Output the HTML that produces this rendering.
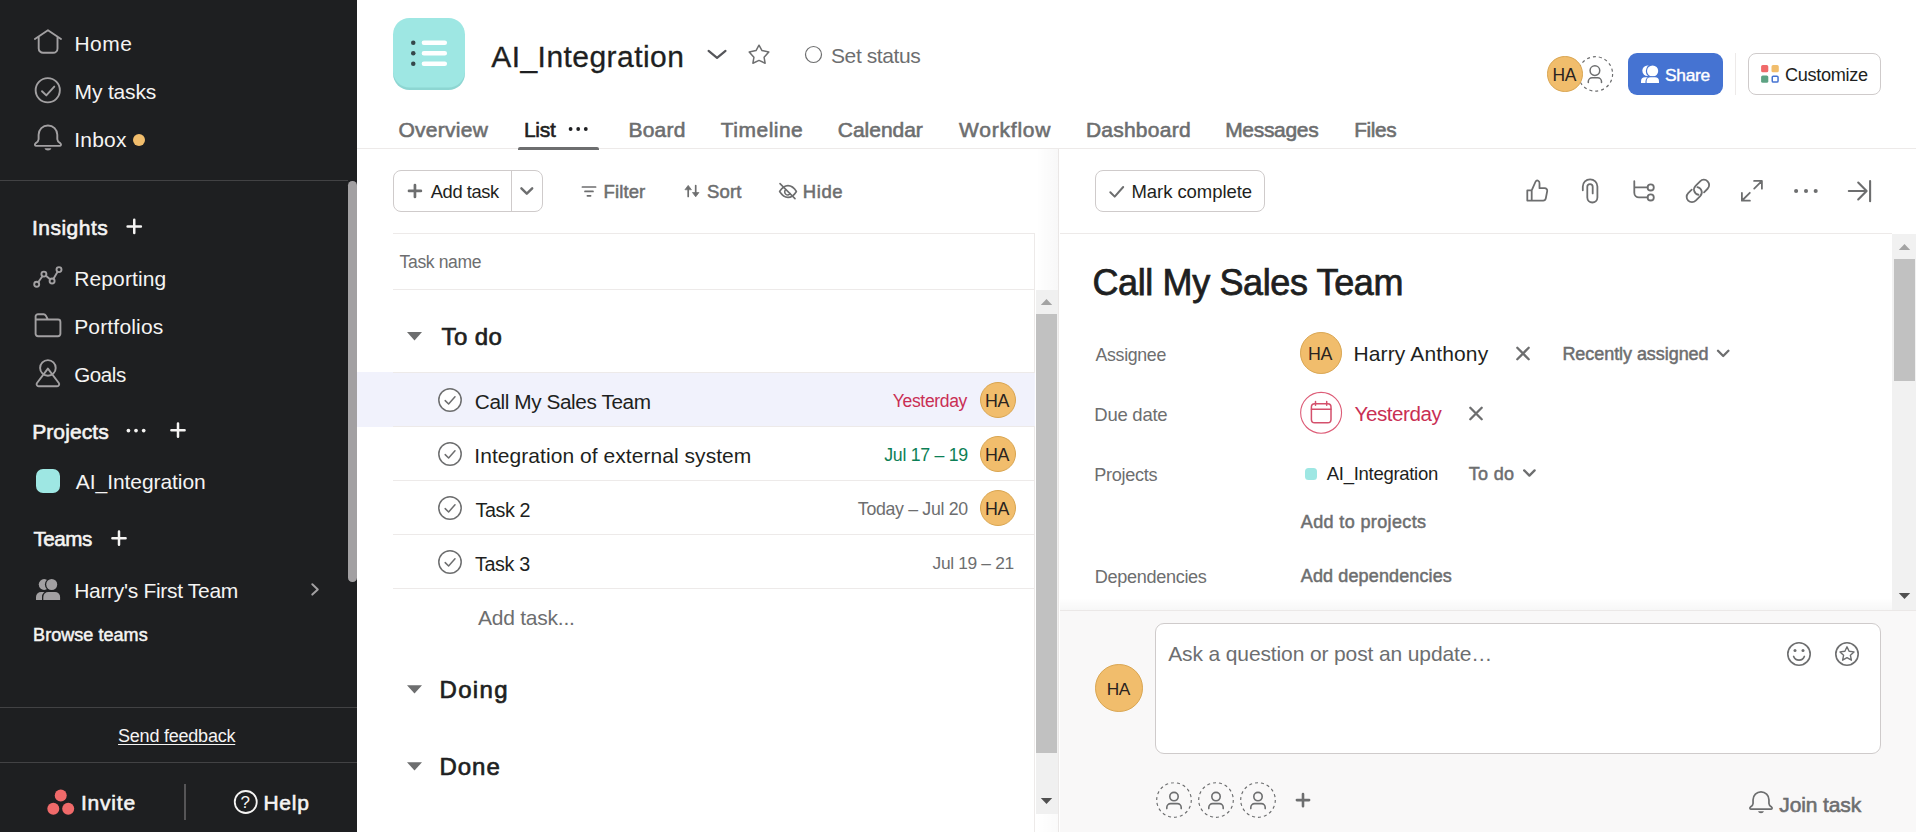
<!DOCTYPE html>
<html lang="en"><head><meta charset="utf-8"><title>AI_Integration - Asana</title>
<style>
html,body{margin:0;padding:0;}
body{width:1916px;height:832px;overflow:hidden;background:#fff;position:relative;font-family:"Liberation Sans",Arial,sans-serif;}
.b{position:absolute;box-sizing:border-box;display:block;}
.t{position:absolute;white-space:nowrap;margin:0;padding:0;font-weight:400;}
svg{overflow:visible;}
</style></head>
<body>
<aside>
<div class="b" style="left:0px;top:0px;width:357px;height:832px;background:#1e1f21;"></div>
<div class="b" style="left:0px;top:180px;width:348px;height:1px;background:#424244;"></div>
<div class="b" style="left:0px;top:707px;width:357px;height:1px;background:#424244;"></div>
<div class="b" style="left:0px;top:762px;width:357px;height:1px;background:#424244;"></div>
<div class="b" style="left:348.3px;top:181px;width:8.6px;height:401px;background:#a2a0a2;border-radius:4.3px;"></div>
<div class="b" style="left:184px;top:784px;width:1.5px;height:36px;background:#565557;"></div>
<span class="t" style="left:74.38px;top:32px;line-height:23px;font-size:21.0px;color:#f5f4f3;letter-spacing:0.500px;">Home</span>
<span class="t" style="left:74.58px;top:80px;line-height:23px;font-size:21.0px;color:#f5f4f3;letter-spacing:-0.171px;">My tasks</span>
<span class="t" style="left:74.33px;top:128px;line-height:23px;font-size:21.0px;color:#f5f4f3;letter-spacing:0.188px;">Inbox</span>
<div class="b" style="left:133px;top:134px;width:12px;height:12px;background:#f1bd6c;border-radius:50%;"></div>
<span class="t" style="left:31.92px;top:216px;line-height:23px;font-size:21.0px;color:#f5f4f3;letter-spacing:0.493px;-webkit-text-stroke:0.59px;">Insights</span>
<span class="t" style="left:74.17px;top:267px;line-height:23px;font-size:21.0px;color:#f5f4f3;letter-spacing:0.134px;">Reporting</span>
<span class="t" style="left:74.17px;top:315px;line-height:23px;font-size:21.0px;color:#f5f4f3;letter-spacing:0.175px;">Portfolios</span>
<span class="t" style="left:74.20px;top:363px;line-height:23px;font-size:20.58px;color:#f5f4f3;letter-spacing:-0.413px;">Goals</span>
<span class="t" style="left:32.17px;top:420px;line-height:23px;font-size:21.0px;color:#f5f4f3;letter-spacing:0.100px;-webkit-text-stroke:0.59px;">Projects</span>
<div class="b" style="left:35.75px;top:469.25px;width:24.5px;height:24px;background:#9ee7e3;border-radius:7px;"></div>
<span class="t" style="left:75.80px;top:470px;line-height:23px;font-size:21.0px;color:#f5f4f3;letter-spacing:-0.062px;">AI_Integration</span>
<span class="t" style="left:33.42px;top:527px;line-height:23px;font-size:20.58px;color:#f5f4f3;letter-spacing:-0.406px;-webkit-text-stroke:0.59px;">Teams</span>
<span class="t" style="left:74.17px;top:579px;line-height:23px;font-size:21.0px;color:#f5f4f3;letter-spacing:-0.304px;">Harry&#x27;s First Team</span>
<span class="t" style="left:33.12px;top:625px;line-height:20px;font-size:18.0px;color:#f5f4f3;letter-spacing:0.045px;-webkit-text-stroke:0.50px;">Browse teams</span>
<span class="t" style="left:118.05px;top:726px;line-height:20px;font-size:18.0px;color:#f5f4f3;letter-spacing:-0.223px;text-decoration:underline;text-decoration-thickness:1px;text-underline-offset:2px;">Send feedback</span>
<span class="t" style="left:80.92px;top:791px;line-height:23px;font-size:21.0px;color:#f5f4f3;letter-spacing:0.805px;-webkit-text-stroke:0.59px;">Invite</span>
<span class="t" style="left:263.38px;top:791px;line-height:23px;font-size:21.0px;color:#f5f4f3;letter-spacing:0.750px;-webkit-text-stroke:0.59px;">Help</span>
<span class="t" style="left:240.57px;top:793px;line-height:19px;font-size:17px;color:#f5f4f3;">?</span>
<svg class="b" style="left:0px;top:0px;" width="357" height="832" viewBox="0 0 357 832">
<g fill="none" stroke="#a2a0a2" stroke-width="1.9" stroke-linecap="round" stroke-linejoin="round">
<path d="M34.9 39 L47.95 30.3 L61 39 M38.7 36.8 V48.4 a4.4 4.4 0 0 0 4.4 4.4 H53.1 a4.4 4.4 0 0 0 4.4 -4.4 V36.8"/>
<circle cx="47.75" cy="90.25" r="12.1"/><path d="M42 91.2 L46.3 95.4 L54.3 86.6"/>
<circle cx="36.7" cy="284.3" r="2.5"/><circle cx="43.9" cy="274.1" r="2.5"/><circle cx="52.1" cy="281" r="2.5"/><circle cx="59" cy="269.6" r="2.5"/>
<path d="M38.2 282.2 L42.4 276.2 M45.9 275.7 L50.1 279.3 M53.5 278.8 L57.6 271.8"/>
<path d="M35.6 333.8 V316.6 a2.4 2.4 0 0 1 2.4 -2.4 H43.6 a2.4 2.4 0 0 1 2.1 1.2 L47.9 319.5 H58 a2.4 2.4 0 0 1 2.4 2.4 V333.8 a2.4 2.4 0 0 1 -2.4 2.4 H38 a2.4 2.4 0 0 1 -2.4 -2.4 Z M35.6 319.5 H47.9"/>
<circle cx="47.9" cy="367.9" r="7.8"/>
<path d="M47.9 368.6 L37 383 a2 2 0 0 0 1.7 3.2 H57.1 a2 2 0 0 0 1.7 -3.2 Z"/>
<path d="M312.3 584.2 L317.8 589.4 L312.3 594.6" stroke-width="2"/>
</g>
<g transform="translate(47.95 125.45) scale(1)" stroke="#a2a0a2" stroke-width="1.90" stroke-linejoin="round" stroke-linecap="round"><path fill="none" d="M-9.35 13.75 V9.35 a9.35 9.35 0 0 1 18.7 0 V13.75 c0 2 1.6 3.2 3.1 4.2 c1.2 1 .6 2.5 -.8 2.5 H-11.65 c-1.4 0 -2 -1.5 -.8 -2.5 c1.5 -1 3.1 -2.2 3.1 -4.2 Z"/><path fill="#a2a0a2" stroke="none" d="M-3.5 22.8 H3.5 a3.6 3.1 0 0 1 -7 0 Z"/></g>
<g fill="none" stroke="#f5f4f3" stroke-width="2.5" stroke-linecap="round">
<path d="M134.25 219.8 V233 M127.6 226.4 H140.9"/>
<path d="M178 423.6 V436.8 M171.4 430.2 H184.6"/>
<path d="M119 531.6 V544.8 M112.4 538.2 H125.6"/>
</g>
<g fill="#f5f4f3"><circle cx="128.4" cy="430.6" r="1.85"/><circle cx="136" cy="430.6" r="1.85"/><circle cx="143.7" cy="430.6" r="1.85"/></g>
<g fill="#a2a0a2">
<circle cx="44.15" cy="584.5" r="5.4"/>
<path d="M36 600 V597 a5 5 0 0 1 5 -5 H47 V600 Z"/>
<circle cx="51.7" cy="584.5" r="6.8" fill="#1e1f21"/>
<circle cx="51.7" cy="584.5" r="5.5"/>
<path d="M43.3 600 V597 a5 5 0 0 1 5 -5 H55.1 a5 5 0 0 1 5 5 V600 Z" stroke="#1e1f21" stroke-width="2.6" paint-order="stroke"/>
</g>
<g fill="#f06a6a"><circle cx="60.75" cy="795.6" r="6"/><circle cx="53.3" cy="808.8" r="6"/><circle cx="68.2" cy="808.8" r="6"/></g>
<circle cx="245.75" cy="802" r="11" fill="none" stroke="#f5f4f3" stroke-width="1.8"/>
</svg>
</aside>
<header>
<div class="b" style="left:393.25px;top:17.9px;width:71.9px;height:72px;background:#9ee7e3;border-radius:16.5px;box-shadow:inset 0 -2.5px 0 rgba(0,70,70,.10);"></div>
<span class="t" style="left:491.20px;top:40px;line-height:33px;font-size:30.0px;color:#1e1f21;letter-spacing:0.456px;-webkit-text-stroke:0.3px;">AI_Integration</span>
<span class="t" style="left:831.00px;top:44px;line-height:23px;font-size:21.0px;color:#6d6e6f;letter-spacing:-0.403px;">Set status</span>
<div class="b" style="left:1547.25px;top:56.0px;width:35.5px;height:35.5px;background:#f1bd6c;border-radius:50%;border:1px solid #d9a550;z-index:3;"></div>
<span class="t" style="left:1552.62px;top:65px;line-height:20px;font-size:17.46px;color:#2a2320;letter-spacing:-0.375px;z-index:3;">HA</span>
<div class="b" style="left:1628.1px;top:53px;width:94.8px;height:41.8px;background:#4573d2;border-radius:9px;"></div>
<span class="t" style="left:1665.05px;top:65px;line-height:20px;font-size:17.39px;color:#ffffff;letter-spacing:-0.294px;-webkit-text-stroke:0.40px;">Share</span>
<div class="b" style="left:1735px;top:53px;width:1px;height:41.5px;background:#edeae9;"></div>
<div class="b" style="left:1748.25px;top:53.25px;width:132.5px;height:41.25px;background:#ffffff;border-radius:8px;border:1px solid #cfcbcb;"></div>
<span class="t" style="left:1784.92px;top:65px;line-height:20px;font-size:18.13px;color:#1e1f21;letter-spacing:-0.287px;">Customize</span>
<div class="b" style="left:357px;top:148px;width:1559px;height:1px;background:#edeae9;"></div>
<span class="t" style="left:398.50px;top:118px;line-height:23px;font-size:21.0px;color:#6d6e6f;letter-spacing:0.268px;-webkit-text-stroke:0.59px;">Overview</span>
<span class="t" style="left:523.88px;top:118px;line-height:23px;font-size:21.0px;color:#1e1f21;letter-spacing:-0.233px;-webkit-text-stroke:0.59px;">List</span>
<span class="t" style="left:628.38px;top:118px;line-height:23px;font-size:21.0px;color:#6d6e6f;letter-spacing:0.269px;-webkit-text-stroke:0.59px;">Board</span>
<span class="t" style="left:720.83px;top:118px;line-height:23px;font-size:21.0px;color:#6d6e6f;letter-spacing:0.479px;-webkit-text-stroke:0.59px;">Timeline</span>
<span class="t" style="left:837.80px;top:118px;line-height:23px;font-size:21.0px;color:#6d6e6f;letter-spacing:-0.025px;-webkit-text-stroke:0.59px;">Calendar</span>
<span class="t" style="left:959.08px;top:118px;line-height:23px;font-size:21.0px;color:#6d6e6f;letter-spacing:0.775px;-webkit-text-stroke:0.59px;">Workflow</span>
<span class="t" style="left:1085.88px;top:118px;line-height:23px;font-size:21.0px;color:#6d6e6f;letter-spacing:0.244px;-webkit-text-stroke:0.59px;">Dashboard</span>
<span class="t" style="left:1225.17px;top:118px;line-height:23px;font-size:21.0px;color:#6d6e6f;letter-spacing:-0.311px;-webkit-text-stroke:0.59px;">Messages</span>
<span class="t" style="left:1354.17px;top:118px;line-height:23px;font-size:20.79px;color:#6d6e6f;letter-spacing:-0.344px;-webkit-text-stroke:0.59px;">Files</span>
<div class="b" style="left:518.25px;top:147px;width:80.75px;height:3px;background:#6d6e6f;border-radius:2px 2px 0 0;"></div>
<svg class="b" style="left:357px;top:0px;" width="1559" height="150" viewBox="357 0 1559 150">
<g fill="#35474a"><circle cx="413.25" cy="42.8" r="2.25"/><circle cx="413.25" cy="53.2" r="2.25"/><circle cx="413.25" cy="63.7" r="2.25"/></g>
<g stroke="#ffffff" stroke-width="4.5" stroke-linecap="round"><path d="M423.9 42.8 H444.8 M423.9 53.2 H444.8 M423.9 63.7 H444.8"/></g>
<path d="M708.6 50.9 L717.05 57.9 L725.5 50.9" fill="none" stroke="#55565a" stroke-width="2.2" stroke-linecap="round" stroke-linejoin="round"/>
<path d="M759 45.2 L762 50.6 L768.8 52 L764.1 57.3 L765.1 63.2 L759 60.4 L752.9 63.2 L753.9 57.3 L749.2 52 L756 50.6 Z" fill="none" stroke="#6d6e6f" stroke-width="1.5" stroke-linejoin="round"/>
<circle cx="813.5" cy="54.5" r="8" fill="none" stroke="#6d6e6f" stroke-width="1.2"/>
<circle cx="1595.4" cy="73.9" r="17.2" fill="none" stroke="#6d6e6f" stroke-width="1.2" stroke-dasharray="3 3"/>
<g fill="none" stroke="#6d6e6f" stroke-width="1.5" stroke-linecap="round"><circle cx="1594.9" cy="70.6" r="4.85"/><path d="M1588.3 82.4 V81.6 a3.8 3.8 0 0 1 3.8 -3.8 h5.6 a3.8 3.8 0 0 1 3.8 3.8 v.8"/></g>
<g fill="#ffffff">
<circle cx="1647.5" cy="70.7" r="5.2"/>
<path d="M1641 82.9 V81.3 a4 4 0 0 1 4 -4 H1649 V82.9 Z"/>
<circle cx="1652.6" cy="71" r="6.8" fill="#4573d2"/>
<circle cx="1652.6" cy="71" r="5.6"/>
<path d="M1646.6 82.9 V81.3 a4 4 0 0 1 4 -4 h4.4 a4 4 0 0 1 4 4 V82.9 Z" stroke="#4573d2" stroke-width="2.2" paint-order="stroke"/>
</g>
<rect x="1761.1" y="65.1" width="7.2" height="7.2" rx="1.6" fill="#f06a6a"/>
<rect x="1771.5" y="65.1" width="7.3" height="7.2" rx="1.6" fill="#f1bd6c"/>
<rect x="1761.1" y="75.5" width="7.2" height="7.3" rx="1.6" fill="#5da283"/>
<rect x="1772.25" y="76.2" width="5.8" height="5.9" rx="1.1" fill="none" stroke="#4573d2" stroke-width="1.5"/>
<g fill="#1e1f21"><circle cx="570.6" cy="129" r="1.9"/><circle cx="578.2" cy="129" r="1.9"/><circle cx="585.8" cy="129" r="1.9"/></g>
</svg>
</header>
<main>
<div class="b" style="left:393.25px;top:170.25px;width:149.5px;height:41.5px;background:#fff;border-radius:8px;border:1px solid #cfcbcb;"></div>
<div class="b" style="left:511px;top:171px;width:1px;height:40px;background:#cfcbcb;"></div>
<span class="t" style="left:430.80px;top:181px;line-height:21px;font-size:18.32px;color:#1e1f21;letter-spacing:-0.400px;">Add task</span>
<span class="t" style="left:603.50px;top:181px;line-height:21px;font-size:18.5px;color:#6d6e6f;letter-spacing:0.125px;-webkit-text-stroke:0.52px;">Filter</span>
<span class="t" style="left:707.12px;top:181px;line-height:21px;font-size:18.5px;color:#6d6e6f;letter-spacing:0.108px;-webkit-text-stroke:0.52px;">Sort</span>
<span class="t" style="left:802.70px;top:181px;line-height:21px;font-size:18.5px;color:#6d6e6f;letter-spacing:0.617px;-webkit-text-stroke:0.52px;">Hide</span>
<div class="b" style="left:393.25px;top:233px;width:641.5px;height:1px;background:#edeae9;"></div>
<div class="b" style="left:393.25px;top:289px;width:641.5px;height:1px;background:#edeae9;"></div>
<div class="b" style="left:1034px;top:233px;width:1px;height:599px;background:#edeae9;"></div>
<span class="t" style="left:399.62px;top:252px;line-height:20px;font-size:17.57px;color:#6d6e6f;letter-spacing:-0.375px;">Task name</span>
<span class="t" style="left:441.50px;top:323px;line-height:27px;font-size:24.0px;color:#1e1f21;letter-spacing:0.438px;-webkit-text-stroke:0.67px;">To do</span>
<span class="t" style="left:439.43px;top:676px;line-height:27px;font-size:24.0px;color:#1e1f21;letter-spacing:1.381px;-webkit-text-stroke:0.67px;">Doing</span>
<span class="t" style="left:439.43px;top:753px;line-height:27px;font-size:24.0px;color:#1e1f21;letter-spacing:1.000px;-webkit-text-stroke:0.67px;">Done</span>
<div class="b" style="left:357px;top:372px;width:677.5px;height:55px;background:#f1f2fc;"></div>
<div class="b" style="left:393.25px;top:372px;width:641.5px;height:1px;background:#edeae9;"></div>
<div class="b" style="left:393.25px;top:426px;width:641.5px;height:1px;background:#edeae9;"></div>
<div class="b" style="left:393.25px;top:480px;width:641.5px;height:1px;background:#edeae9;"></div>
<div class="b" style="left:393.25px;top:534px;width:641.5px;height:1px;background:#edeae9;"></div>
<div class="b" style="left:393.25px;top:588px;width:641.5px;height:1px;background:#edeae9;"></div>
<span class="t" style="left:474.80px;top:390px;line-height:23px;font-size:20.79px;color:#1e1f21;letter-spacing:-0.415px;">Call My Sales Team</span>
<span class="t" style="left:892.83px;top:391px;line-height:20px;font-size:17.57px;color:#c92f54;letter-spacing:-0.369px;">Yesterday</span>
<div class="b" style="left:980px;top:382.02px;width:36px;height:36px;background:#f1bd6c;border-radius:50%;border:1px solid #d9a550;"></div>
<span class="t" style="left:985.12px;top:391px;line-height:20px;font-size:17.82px;color:#2a2320;letter-spacing:-0.375px;">HA</span>
<span class="t" style="left:474.32px;top:444px;line-height:23px;font-size:21.0px;color:#1e1f21;letter-spacing:0.053px;">Integration of external system</span>
<span class="t" style="left:884.25px;top:445px;line-height:20px;font-size:17.76px;color:#0d7f56;letter-spacing:-0.287px;">Jul 17 – 19</span>
<div class="b" style="left:980px;top:436.02px;width:36px;height:36px;background:#f1bd6c;border-radius:50%;border:1px solid #d9a550;"></div>
<span class="t" style="left:985.12px;top:445px;line-height:20px;font-size:17.82px;color:#2a2320;letter-spacing:-0.375px;">HA</span>
<span class="t" style="left:475.43px;top:499px;line-height:22px;font-size:19.74px;color:#1e1f21;letter-spacing:-0.410px;">Task 2</span>
<span class="t" style="left:857.83px;top:499px;line-height:20px;font-size:17.76px;color:#6d6e6f;letter-spacing:-0.323px;">Today – Jul 20</span>
<div class="b" style="left:980px;top:490.02px;width:36px;height:36px;background:#f1bd6c;border-radius:50%;border:1px solid #d9a550;"></div>
<span class="t" style="left:985.12px;top:499px;line-height:20px;font-size:17.82px;color:#2a2320;letter-spacing:-0.375px;">HA</span>
<span class="t" style="left:475.02px;top:553px;line-height:22px;font-size:19.74px;color:#1e1f21;letter-spacing:-0.375px;">Task 3</span>
<span class="t" style="left:932.55px;top:553px;line-height:20px;font-size:17.39px;color:#6d6e6f;letter-spacing:-0.340px;">Jul 19 – 21</span>
<span class="t" style="left:478.00px;top:606px;line-height:23px;font-size:21.0px;color:#6d6e6f;letter-spacing:-0.237px;">Add task...</span>
<div class="b" style="left:1035.5px;top:149px;width:22.5px;height:141px;background:linear-gradient(90deg,rgba(0,0,0,0),rgba(0,0,0,.028));"></div>
<div class="b" style="left:1035.5px;top:814px;width:22.5px;height:18px;background:linear-gradient(90deg,rgba(0,0,0,0),rgba(0,0,0,.02));"></div>
<div class="b" style="left:1035.5px;top:289.5px;width:22.5px;height:524.5px;background:#f0f0f0;"></div>
<div class="b" style="left:1036.2px;top:313.6px;width:20.6px;height:439.2px;background:#c1c1c1;"></div>
<svg class="b" style="left:357px;top:150px;" width="702" height="682" viewBox="357 150 702 682">
<g fill="none" stroke="#6d6e6f" stroke-width="2.7" stroke-linecap="round"><path d="M414.95 185 V196.9 M409 190.95 H420.9"/></g>
<path d="M521.4 188.3 L526.8 193.7 L532.2 188.3" fill="none" stroke="#6d6e6f" stroke-width="2.4" stroke-linecap="round" stroke-linejoin="round"/>
<g fill="none" stroke="#6d6e6f" stroke-width="1.7" stroke-linecap="round"><path d="M582.4 187 H595.6 M585 191.4 H593 M587.4 195.8 H590.6"/></g>
<g fill="#6d6e6f" stroke="#6d6e6f" stroke-width="1.7" stroke-linecap="round" stroke-linejoin="round"><path fill="none" d="M688.2 196.4 V188.6 M695.7 185.6 V193.4"/><path stroke-width=".8" d="M685.2 189.4 L688.2 185.4 L691.2 189.4 Z M692.7 192.8 L695.7 196.8 L698.7 192.8 Z"/></g>
<g fill="none" stroke="#6d6e6f" stroke-width="1.6" stroke-linecap="round" stroke-linejoin="round"><path d="M779.6 191.5 C782.4 187.2 785.2 185.6 788 185.6 C790.8 185.6 793.8 187.2 796.4 191.5 C793.8 195.8 790.8 197.4 788 197.4 C785.2 197.4 782.4 195.8 779.6 191.5 Z"/><path d="M785.6 189.8 a3 3 0 1 0 4.6 3.8"/><path d="M780 183.6 L795 198.6"/></g>
<g fill="#6d6e6f"><path d="M407 332 H422 L414.5 340.4 Z"/><path d="M407 685.2 H422 L414.5 693.6 Z"/><path d="M407 762.2 H422 L414.5 770.6 Z"/></g>
<g fill="#fff" stroke="#6d6e6f" stroke-width="1.5" stroke-linecap="round" stroke-linejoin="round">
<circle cx="450" cy="400" r="11.2"/><path fill="none" d="M445.2 400.6 L448.6 404 L455 396.8"/><circle cx="450" cy="454" r="11.2"/><path fill="none" d="M445.2 454.6 L448.6 458 L455 450.8"/><circle cx="450" cy="508" r="11.2"/><path fill="none" d="M445.2 508.6 L448.6 512 L455 504.8"/><circle cx="450" cy="562" r="11.2"/><path fill="none" d="M445.2 562.6 L448.6 566 L455 558.8"/>
</g>
<path d="M1040.8 305 H1052.2 L1046.5 299 Z" fill="#a3a3a3"/><path d="M1040.8 798 H1052.2 L1046.5 804 Z" fill="#505050"/>
</svg>
</main>
<section>
<div class="b" style="left:1058px;top:149px;width:1.2px;height:683px;background:#eae7e6;"></div>
<div class="b" style="left:1059.2px;top:149px;width:856.8px;height:683px;background:#ffffff;"></div>
<div class="b" style="left:1059.5px;top:233px;width:832.7px;height:1px;background:#edeae9;"></div>
<div class="b" style="left:1095px;top:170.25px;width:169.5px;height:41.5px;background:#fff;border-radius:8px;border:1px solid #cfcbcb;"></div>
<span class="t" style="left:1131.50px;top:181px;line-height:21px;font-size:18.5px;color:#1e1f21;letter-spacing:-0.067px;">Mark complete</span>
<span class="t" style="left:1092.45px;top:262px;line-height:41px;font-size:36.0px;color:#1e1f21;letter-spacing:-0.375px;-webkit-text-stroke:0.75px;">Call My Sales Team</span>
<span class="t" style="left:1095.50px;top:345px;line-height:20px;font-size:17.76px;color:#6d6e6f;letter-spacing:-0.321px;">Assignee</span>
<span class="t" style="left:1094.30px;top:404px;line-height:21px;font-size:18.5px;color:#6d6e6f;letter-spacing:-0.250px;">Due date</span>
<span class="t" style="left:1094.30px;top:465px;line-height:20px;font-size:18.13px;color:#6d6e6f;letter-spacing:-0.311px;">Projects</span>
<span class="t" style="left:1094.70px;top:567px;line-height:20px;font-size:18.13px;color:#6d6e6f;letter-spacing:-0.325px;">Dependencies</span>
<div class="b" style="left:1300.1px;top:332.1px;width:41.8px;height:41.8px;background:#f1bd6c;border-radius:50%;border:1px solid #d9a550;"></div>
<span class="t" style="left:1308.12px;top:344px;line-height:20px;font-size:17.82px;color:#2a2320;letter-spacing:-0.375px;">HA</span>
<span class="t" style="left:1353.38px;top:342px;line-height:23px;font-size:21.0px;color:#1e1f21;letter-spacing:0.142px;">Harry Anthony</span>
<span class="t" style="left:1562.42px;top:344px;line-height:20px;font-size:18.0px;color:#6d6e6f;letter-spacing:-0.058px;-webkit-text-stroke:0.50px;">Recently assigned</span>
<span class="t" style="left:1354.50px;top:402px;line-height:23px;font-size:20.58px;color:#c92f54;letter-spacing:-0.447px;">Yesterday</span>
<div class="b" style="left:1305px;top:467.5px;width:12px;height:12px;background:#9ee7e3;border-radius:3.5px;"></div>
<span class="t" style="left:1326.80px;top:463px;line-height:21px;font-size:18.5px;color:#1e1f21;letter-spacing:-0.292px;">AI_Integration</span>
<span class="t" style="left:1468.83px;top:464px;line-height:20px;font-size:18.0px;color:#6d6e6f;letter-spacing:0.281px;-webkit-text-stroke:0.50px;">To do</span>
<span class="t" style="left:1300.80px;top:512px;line-height:20px;font-size:18.0px;color:#6d6e6f;letter-spacing:0.371px;-webkit-text-stroke:0.50px;">Add to projects</span>
<span class="t" style="left:1300.80px;top:566px;line-height:20px;font-size:18.0px;color:#6d6e6f;letter-spacing:0.127px;-webkit-text-stroke:0.50px;">Add dependencies</span>
<div class="b" style="left:1892.2px;top:233.5px;width:23.8px;height:376px;background:#f1f1f1;"></div>
<div class="b" style="left:1894.3px;top:259px;width:20.6px;height:122px;background:#c1c1c1;"></div>
<div class="b" style="left:1059.5px;top:598px;width:832.7px;height:12px;background:linear-gradient(180deg,rgba(0,0,0,0),rgba(0,0,0,.03));"></div>
<div class="b" style="left:1059.5px;top:609.5px;width:856.5px;height:222.5px;background:#f9f8f8;border-top:1px solid #ebe8e7;"></div>
<div class="b" style="left:1155px;top:623px;width:726px;height:131px;background:#ffffff;border-radius:9px;border:1px solid #cfcbcb;"></div>
<div class="b" style="left:1095.2px;top:664.2px;width:47.6px;height:47.6px;background:#f1bd6c;border-radius:50%;border:1px solid #d9a550;"></div>
<span class="t" style="left:1106.72px;top:679px;line-height:20px;font-size:17.28px;color:#2a2320;letter-spacing:-0.325px;">HA</span>
<span class="t" style="left:1168.20px;top:642px;line-height:23px;font-size:21.0px;color:#6d6e6f;letter-spacing:-0.123px;">Ask a question or post an update…</span>
<span class="t" style="left:1779.25px;top:793px;line-height:23px;font-size:21.0px;color:#6d6e6f;letter-spacing:-0.116px;-webkit-text-stroke:0.59px;">Join task</span>
<svg class="b" style="left:1059px;top:150px;" width="857" height="682" viewBox="1059 150 857 682">
<path d="M1110.3 192.2 L1114.7 196.6 L1123.2 187" fill="none" stroke="#6d6e6f" stroke-width="2" stroke-linecap="round" stroke-linejoin="round"/>
<g fill="none" stroke="#6d6e6f" stroke-width="1.8" stroke-linecap="round" stroke-linejoin="round">
<path d="M1527.3 190.4 H1531.7 V200.6 H1527.3 Z M1531.7 190.4 L1535.4 182 C1536 180.6 1537.2 180.2 1538.2 180.8 C1539.4 181.4 1539.6 182.6 1539.5 183.6 V188.2 H1544.6 C1546.4 188.2 1547.5 189.6 1547.2 191.2 L1545.8 198.4 C1545.5 199.8 1544.6 200.6 1543.2 200.6 H1531.7"/>
<path d="M1582.8 190.3 V186.6 a7.3 7.3 0 0 1 14.6 0 V197.5 a5.05 5.05 0 0 1 -10.1 0 V186.8 a2.7 2.7 0 0 1 5.4 0 V193.4"/>
<path d="M1634.3 181.2 V192.7 a4.7 4.7 0 0 0 4.7 4.7 H1647.5 M1634.3 187.4 H1647.5"/><circle cx="1650.7" cy="187.4" r="3.1"/><circle cx="1650.7" cy="197.4" r="3.1"/>
<g transform="translate(1697.9 190.95) rotate(-45)"><path d="M-2.34 3.04 A5.3 5.3 0 0 1 2 -5.3 H8.4 A5.3 5.3 0 0 1 8.4 5.3 H3.4"/><path d="M2.34 -3.04 A5.3 5.3 0 0 1 -2 5.3 H-8.4 A5.3 5.3 0 0 1 -8.4 -5.3 H-3.4"/></g>
<path d="M1754.1 180.9 H1761.9 V188.7 M1761.7 181.1 L1754.2 188.6 M1749.9 200.7 H1741.9 V192.9 M1742.1 200.5 L1749.8 192.8"/>
<path d="M1848.8 191 H1866 M1858.2 182.6 L1866.6 191 L1858.2 199.4 M1870.1 181 V201.2" stroke-width="2.1"/>
</g>
<g fill="#6d6e6f"><circle cx="1796.1" cy="191" r="2.05"/><circle cx="1806" cy="191" r="2.05"/><circle cx="1815.7" cy="191" r="2.05"/></g>
<g fill="none" stroke="#6d6e6f" stroke-width="2.3" stroke-linecap="round"><path d="M1517.3 347.8 L1528.7 359.2 M1528.7 347.8 L1517.3 359.2 M1470.3 407.8 L1481.7 419.2 M1481.7 407.8 L1470.3 419.2"/></g>
<g fill="none" stroke="#6d6e6f" stroke-width="2.3" stroke-linecap="round" stroke-linejoin="round"><path d="M1718 350.8 L1723.2 356 L1728.4 350.8 M1524.2 470.4 L1529.4 475.6 L1534.6 470.4"/></g>
<circle cx="1321.1" cy="412.8" r="20.45" fill="#fff" stroke="#dd5c77" stroke-width="1.1"/>
<g fill="none" stroke="#d4506c" stroke-width="1.5" stroke-linecap="round" stroke-linejoin="round"><rect x="1311.4" y="403.8" width="19.6" height="19" rx="3.3"/><path d="M1311.4 409.3 H1331 M1315.5 401.6 V405.2 M1326.7 401.6 V405.2"/></g>
<path d="M1898.8 250 H1910.2 L1904.5 244 Z" fill="#a3a3a3"/><path d="M1898.8 593 H1910.2 L1904.5 599 Z" fill="#505050"/>
<g fill="none" stroke="#6d6e6f" stroke-width="1.6" stroke-linecap="round" stroke-linejoin="round">
<circle cx="1799" cy="654" r="11.2"/><path d="M1793.6 656.4 a5.8 5.8 0 0 0 10.8 0"/>
<circle cx="1847" cy="654" r="11.2"/><path d="M1847 646.8 L1849.1 651.3 L1854 651.9 L1850.4 655.3 L1851.4 660.2 L1847 657.7 L1842.6 660.2 L1843.6 655.3 L1840 651.9 L1844.9 651.3 Z" stroke-width="1.4"/>
</g>
<g fill="#6d6e6f"><circle cx="1795" cy="650.4" r="1.5"/><circle cx="1803" cy="650.4" r="1.5"/></g>
<circle cx="1174" cy="800" r="17.3" fill="#f9f8f8" stroke="#6d6e6f" stroke-width="1.15" stroke-dasharray="3 3"/><g fill="none" stroke="#6d6e6f" stroke-width="1.6" stroke-linecap="round"><circle cx="1174" cy="796.6" r="4.2"/><path d="M1166.8 808.6 v-1.2 a3.8 3.8 0 0 1 3.8 -3.8 h6.8 a3.8 3.8 0 0 1 3.8 3.8 v1.2"/></g><circle cx="1216" cy="800" r="17.3" fill="#f9f8f8" stroke="#6d6e6f" stroke-width="1.15" stroke-dasharray="3 3"/><g fill="none" stroke="#6d6e6f" stroke-width="1.6" stroke-linecap="round"><circle cx="1216" cy="796.6" r="4.2"/><path d="M1208.8 808.6 v-1.2 a3.8 3.8 0 0 1 3.8 -3.8 h6.8 a3.8 3.8 0 0 1 3.8 3.8 v1.2"/></g><circle cx="1258" cy="800" r="17.3" fill="#f9f8f8" stroke="#6d6e6f" stroke-width="1.15" stroke-dasharray="3 3"/><g fill="none" stroke="#6d6e6f" stroke-width="1.6" stroke-linecap="round"><circle cx="1258" cy="796.6" r="4.2"/><path d="M1250.8 808.6 v-1.2 a3.8 3.8 0 0 1 3.8 -3.8 h6.8 a3.8 3.8 0 0 1 3.8 3.8 v1.2"/></g>
<g fill="none" stroke="#6d6e6f" stroke-width="2.6" stroke-linecap="round"><path d="M1303 794 V806.2 M1296.9 800.1 H1309.1"/></g>
<g transform="translate(1761 791.8) scale(0.85)" stroke="#6d6e6f" stroke-width="2.00" stroke-linejoin="round" stroke-linecap="round"><path fill="none" d="M-9.35 13.75 V9.35 a9.35 9.35 0 0 1 18.7 0 V13.75 c0 2 1.6 3.2 3.1 4.2 c1.2 1 .6 2.5 -.8 2.5 H-11.65 c-1.4 0 -2 -1.5 -.8 -2.5 c1.5 -1 3.1 -2.2 3.1 -4.2 Z"/><path fill="#6d6e6f" stroke="none" d="M-3.5 22.8 H3.5 a3.6 3.1 0 0 1 -7 0 Z"/></g></svg>
</section>
</body></html>
